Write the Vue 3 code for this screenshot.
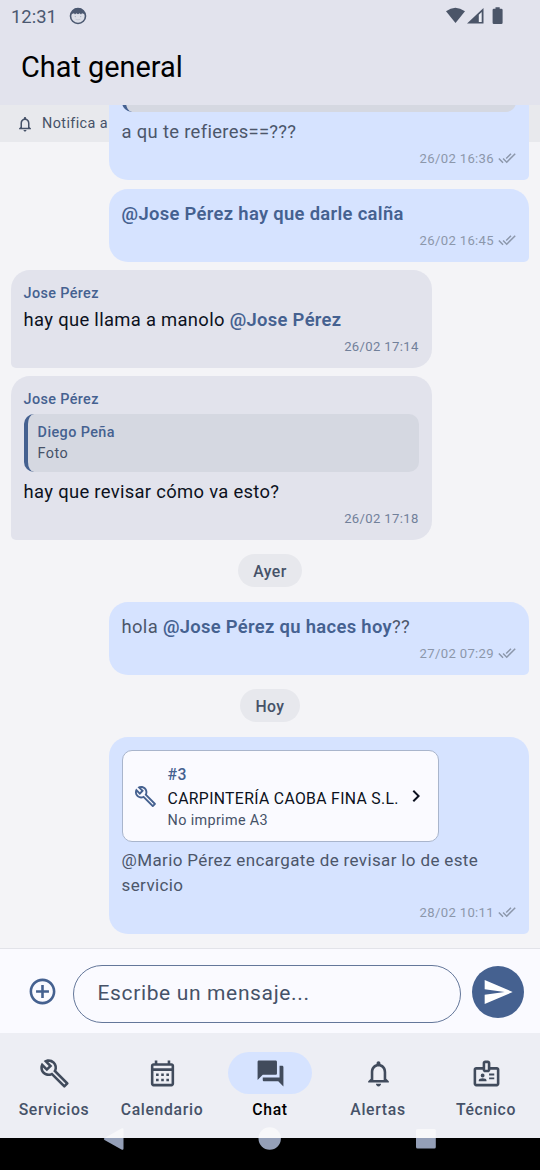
<script setup>
const icons = {
  wrench: 'M22.61 18.99l-9.08-9.08c.93-2.34.45-5.1-1.44-7C9.79.61 6.21.4 3.66 2.26L7.5 6.11 6.08 7.52 2.25 3.69C.39 6.23.6 9.82 2.9 12.11c1.86 1.86 4.57 2.35 6.89 1.48l9.11 9.11c.39.39 1.02.39 1.41 0l2.3-2.3c.4-.38.4-1.01 0-1.41zm-3 1.6l-9.46-9.46c-.61.45-1.29.72-2 .82-1.36.2-2.79-.21-3.83-1.25C3.37 9.76 2.93 8.5 3 7.26l3.09 3.09 4.24-4.24-3.09-3.09c1.24-.07 2.49.37 3.44 1.31 1.08 1.08 1.49 2.57 1.24 3.96-.12.71-.42 1.37-.88 1.96l9.45 9.45-.88.89z',
  calendar: 'M19 4h-1V2h-2v2H8V2H6v2H5c-1.11 0-1.99.9-1.99 2L3 20c0 1.1.89 2 2 2h14c1.1 0 2-.9 2-2V6c0-1.1-.9-2-2-2zm0 16H5V10h14v10zm0-12H5V6h14v2zM9 14H7v-2h2v2zm4 0h-2v-2h2v2zm4 0h-2v-2h2v2zm-8 4H7v-2h2v2zm4 0h-2v-2h2v2zm4 0h-2v-2h2v2z',
  chat: 'M21 6h-2v9H6v2c0 .55.45 1 1 1h11l4 4V7c0-.55-.45-1-1-1zm-4 6V3c0-.55-.45-1-1-1H3c-.55 0-1 .45-1 1v14l4-4h10c.55 0 1-.45 1-1z',
  bell: 'M12 22c1.1 0 2-.9 2-2h-4c0 1.1.9 2 2 2zm6-6v-5c0-3.07-1.63-5.64-4.5-6.32V4c0-.83-.67-1.5-1.5-1.5s-1.5.67-1.5 1.5v.68C7.64 5.36 6 7.92 6 11v5l-2 2v1h16v-1l-2-2zm-2 1H8v-6c0-2.48 1.51-4.5 4-4.5s4 2.02 4 4.5v6z',
  badge: 'M20 7h-5V4c0-1.1-.9-2-2-2h-2c-1.1 0-2 .9-2 2v3H4c-1.1 0-2 .9-2 2v11c0 1.1.9 2 2 2h16c1.1 0 2-.9 2-2V9c0-1.1-.9-2-2-2zM11 4h2v5h-2V4zm9 16H4V9h5c0 1.1.9 2 2 2h2c1.1 0 2-.9 2-2h5v11zM9 12a1.5 1.5 0 1 0 0 3a1.5 1.5 0 0 0 0-3zM6 18h6v-.57c0-.6-.36-1.15-.92-1.39a5.2 5.2 0 0 0-4.16 0c-.56.24-.92.78-.92 1.39V18zM14 12h4v1.5h-4zM14 15h4v1.5h-4z',
  ticks: 'M18 7l-1.41-1.41-6.34 6.34 1.41 1.41L18 7zm4.24-1.41L11.66 16.17 7.48 12l-1.41 1.41L11.66 19l12-12-1.42-1.41zM.41 13.41L6 19l1.41-1.41L1.83 12 .41 13.41z',
  plus: 'M13 7h-2v4H7v2h4v4h2v-4h4v-2h-4V7zm-1-5C6.48 2 2 6.48 2 12s4.48 10 10 10 10-4.48 10-10S17.52 2 12 2zm0 18c-4.41 0-8-3.59-8-8s3.59-8 8-8 8 3.59 8 8-3.59 8-8 8z',
  send: 'M2.01 21L23 12 2.01 3 2 10l15 2-15 2z',
  chevron: 'M10 6L8.59 7.41 13.17 12l-4.58 4.59L10 18l6-6z'
}

const messages = [
  { mine: true, quote: {}, parts: [{ t: 'a qu te refieres==???' }], time: '26/02 16:36', spaced: true },
  { mine: true, parts: [{ t: '@Jose Pérez hay que darle calña', b: true }], time: '26/02 16:45' },
  { name: 'Jose Pérez', parts: [{ t: 'hay que llama a manolo ' }, { t: '@Jose Pérez', b: true }], time: '26/02 17:14' },
  { name: 'Jose Pérez', quote: { name: 'Diego Peña', text: 'Foto' }, parts: [{ t: 'hay que revisar cómo va esto?' }], time: '26/02 17:18' },
  { day: 'Ayer' },
  { mine: true, parts: [{ t: 'hola ' }, { t: '@Jose Pérez qu haces hoy', b: true }, { t: '??' }], time: '27/02 07:29' },
  { day: 'Hoy' },
  {
    mine: true,
    card: { id: '#3', client: 'CARPINTERÍA CAOBA FINA S.L.', note: 'No imprime A3' },
    parts: [{ t: '@Mario Pérez encargate de revisar lo de este servicio' }],
    time: '28/02 10:11'
  }
]

const tabs = [
  { label: 'Servicios', icon: 'wrench' },
  { label: 'Calendario', icon: 'calendar' },
  { label: 'Chat', icon: 'chat', active: true },
  { label: 'Alertas', icon: 'bell' },
  { label: 'Técnico', icon: 'badge' }
]
</script>

<template>
  <div class="phone">
    <header class="top">
      <div class="status">
        <span class="clock">12:31</span>
        <svg class="face" viewBox="0 0 18 18">
          <circle cx="9" cy="9" r="7.5" fill="#dcdfe8" stroke="#4b5870" stroke-width="1.6" />
          <path d="M2.200 7.200C2.800 3 6 1.200 9 1.200s6.200 1.800 6.800 6l-2.800-1-1 1.300-1.300-1.200L9 7.200 7.300 6.300 6 7.500 5 6.200z" fill="#4b5870" />
          <circle cx="6.300" cy="9.600" r=".6" fill="#a0a8b8" />
          <circle cx="11.700" cy="9.600" r=".6" fill="#a0a8b8" />
          <path d="M6.500 12.200q2.500 1.300 5 0" fill="none" stroke="#bcc2ce" stroke-width=".7" />
        </svg>
        <svg class="signals" viewBox="0 0 60 20">
          <path d="M1 5.200Q10.200 -1.800 20 5.200L10.500 17z" fill="#4b5568" />
          <path d="M38.500 2v15.500H22z" fill="#4b5568" />
          <path d="M33.800 8.700l2.900-2.800V16h-2.900z" fill="#eceef5" />
          <path d="M50.500 1.200h4.200v1.500h1.600q1.300 0 1.300 1.300v12.700q0 1.300-1.300 1.300h-7.400q-1.300 0-1.300-1.300V4q0-1.300 1.300-1.300h1.600z" fill="#4b5568" />
        </svg>
      </div>
      <h1>Chat general</h1>
    </header>

    <main class="body">
      <div class="notice">
        <svg viewBox="0 0 24 24"><path :d="icons.bell" /></svg>
        <span>Notifica a</span>
      </div>
      <div class="list">
        <template v-for="(m, i) in messages" :key="i">
          <div v-if="m.day" class="day">{{ m.day }}</div>
          <article v-else class="bubble" :class="{ mine: m.mine, spaced: m.spaced, carded: m.card, quoted: m.quote }">
            <div v-if="m.name" class="name">{{ m.name }}</div>
            <div v-if="m.quote" class="quote">
              <b v-if="m.quote.name">{{ m.quote.name }}</b>
              <span v-if="m.quote.text">{{ m.quote.text }}</span>
            </div>
            <div v-if="m.card" class="card">
              <svg class="tool" viewBox="0 0 24 24"><path :d="icons.wrench" /></svg>
              <div class="info">
                <b>{{ m.card.id }}</b>
                <strong>{{ m.card.client }}</strong>
                <span>{{ m.card.note }}</span>
              </div>
              <svg class="go" viewBox="0 0 24 24"><path :d="icons.chevron" /></svg>
            </div>
            <p><span v-for="(p, k) in m.parts" :key="k" :class="{ mention: p.b }">{{ p.t }}</span></p>
            <footer>
              <time>{{ m.time }}</time>
              <svg v-if="m.mine" viewBox="0 0 24 24"><path :d="icons.ticks" /></svg>
            </footer>
          </article>
        </template>
      </div>
    </main>

    <section class="composer">
      <svg class="plus" viewBox="0 0 24 24"><path :d="icons.plus" /></svg>
      <div class="field">Escribe un mensaje...</div>
      <div class="send"><svg viewBox="0 0 24 24"><path :d="icons.send" /></svg></div>
    </section>

    <nav class="tabs">
      <div v-for="t in tabs" :key="t.label" class="tab" :class="{ active: t.active }">
        <div class="pill"><svg viewBox="0 0 24 24"><path fill-rule="evenodd" :d="icons[t.icon]" /></svg></div>
        <span>{{ t.label }}</span>
      </div>
    </nav>
    <div class="system">
      <svg class="keys" viewBox="0 0 540 24">
        <defs>
          <linearGradient id="key" x1="0" y1="0" x2="0" y2="24" gradientUnits="userSpaceOnUse">
            <stop offset=".46" stop-color="#f8f8fa" />
            <stop offset=".46" stop-color="#949fb7" />
          </linearGradient>
        </defs>
        <path d="M121.500 1.500q2-1 2 1v19q0 2-2 1L104.500 13q-1.500-1 0-2z" fill="url(#key)" />
        <circle cx="269.700" cy="11.500" r="11.200" fill="url(#key)" />
        <rect x="416" y="2" width="19.800" height="19.500" rx="1.500" fill="url(#key)" />
      </svg>
    </div>
  </div>
</template>

<style>
body { margin: 0; background: #000; }
</style>

<style scoped>
.phone { width: 540px; height: 1170px; display: flex; flex-direction: column; overflow: hidden; background: #f4f4f7; font-family: Roboto, sans-serif; color: #465268; }
svg { fill: currentColor; display: block; flex: none; }
.top { height: 105px; background: #e2e3ed; flex: none; }
.status { display: flex; align-items: center; height: 32px; padding-left: 11px; color: #4b5870; }
.clock { font-size: 18.400px; letter-spacing: 0; width: 58px; padding-top: 1px; }
.face { width: 18px; height: 18px; }
.signals { width: 60px; height: 20px; margin: 0 35px 0 auto; }
h1 { margin: 17px 0 0 21px; font-size: 28.900px; line-height: 36px; font-weight: 400; letter-spacing: 0; color: #000; }
.body { display: grid; height: 843px; flex: none; overflow: hidden; }
.notice, .list { grid-area: 1 / 1; }
.notice { display: flex; align-items: center; height: 37px; padding-left: 16px; gap: 8px; background: #e8e9ed; font-size: 14.400px; letter-spacing: .4px; }
.notice svg { width: 18px; height: 18px; }
.list { z-index: 1; min-height: 0; display: flex; flex-direction: column; justify-content: flex-end; gap: 8px; padding: 0 11px 14px; }
.bubble { box-sizing: border-box; width: 421px; flex: none; align-self: flex-start; margin-left: -.4px; padding: 13px; border-radius: 19px 19px 19px 5px; background: #e2e3ec; }
.bubble.mine { width: 420.400px; align-self: flex-end; margin-left: 0; padding-top: 12px; background: #d6e3ff; border-radius: 19px 19px 5px 19px; }
.bubble.mine.carded { padding-top: 13px; }
.bubble.spaced { margin-bottom: 1px; }
.name { height: 20px; line-height: 20px; padding-top: 1px; margin-bottom: 3px; font-size: 14.400px; font-weight: 500; letter-spacing: .36px; color: #456190; }
.quoted .name { margin-bottom: 4px; }
.quote { box-sizing: border-box; height: 58px; margin-bottom: 7px; padding: 8px 10px; border-left: 4px solid #456190; border-radius: 10px; background: #d5d8e1; display: flex; flex-direction: column; font-size: 14.400px; line-height: 21px; letter-spacing: .4px; }
.quote b { font-weight: 500; color: #456190; }
p { margin: 0; font-size: 18.400px; line-height: 26px; letter-spacing: .32px; color: #0c1120; }
.mine p { color: #4c566a; }
.carded p { font-size: 17px; line-height: 25px; letter-spacing: .36px; }
.mention { font-weight: 600; color: #456190; }
footer { display: flex; justify-content: flex-end; align-items: center; gap: 4px; height: 18px; margin-top: 4px; font-size: 13.100px; color: #71809a; letter-spacing: .34px; }
.carded footer { margin-top: 5px; }
.mine footer { color: #8c97ab; }
footer svg { width: 18px; height: 18px; }
.day { box-sizing: border-box; align-self: center; height: 33px; line-height: 33px; padding: 1px 15.500px 0; margin: 6px 0 7px; border-radius: 17px; background: #e7e8ed; font-size: 15.750px; font-weight: 500; letter-spacing: .4px; }
.card { box-sizing: border-box; width: 317px; height: 92px; margin-bottom: 6px; display: flex; align-items: center; border: 1px solid #a9b5cc; border-radius: 10px; background: #fafaff; padding-left: 11px; }
.tool { width: 23px; height: 23px; color: #456190; }
.info { display: flex; flex-direction: column; width: 236px; margin-left: 11px; padding-top: 2px; white-space: nowrap; }
.info b { font-size: 15.750px; line-height: 22px; font-weight: 500; color: #456190; letter-spacing: .5px; }
.info strong { font-size: 15.750px; line-height: 25px; font-weight: 400; color: #0c1120; letter-spacing: .34px; }
.info span { font-size: 14.400px; line-height: 19px; letter-spacing: .34px; }
.go { width: 24px; height: 24px; color: #0c1120; }
.composer { box-sizing: border-box; height: 85px; flex: none; display: flex; align-items: center; border-top: 1px solid #e2e3e9; background: #fafaff; padding: 6px 16px 0 26.500px; }
.plus { width: 31px; height: 31px; margin-top: -5px; color: #456190; }
.field { box-sizing: border-box; width: 388px; height: 58px; line-height: 55px; margin-left: 15.500px; padding-left: 23.500px; border: 1px solid #64779a; border-radius: 29px; font-size: 21px; letter-spacing: .64px; }
.send { width: 52px; height: 52px; margin: -5px 0 0 11px; border-radius: 50%; background: #456190; color: #fff; display: grid; place-items: center; }
.send svg { width: 32px; height: 32px; }
.tabs { height: 105px; flex: none; display: grid; grid-template-columns: repeat(5, 1fr); background: #edeef4; }
.tab { display: flex; flex-direction: column; align-items: center; padding-top: 19px; font-size: 15.750px; font-weight: 500; letter-spacing: .66px; }
.pill { width: 84px; height: 42px; border-radius: 21px; display: grid; place-items: center; color: #414b5c; }
.pill svg { width: 31px; height: 31px; }
.tab span { margin-top: 5px; line-height: 21px; }
.active { color: #000; }
.active .pill { background: #d6e3ff; }
.system { flex: 1; background: #000; position: relative; }
.keys { position: absolute; top: -11px; left: 0; width: 540px; height: 24px; }
</style>
